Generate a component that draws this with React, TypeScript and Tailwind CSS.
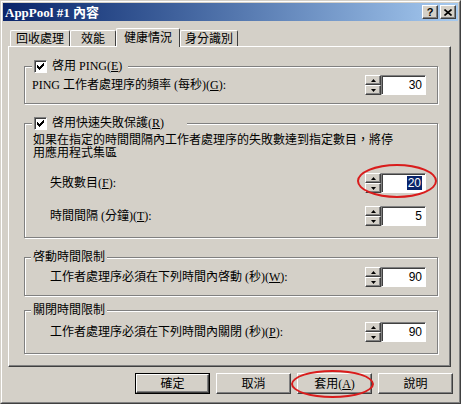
import type { ReactNode } from "react";

const raised =
  "border border-t-white border-l-white border-r-[#404040] border-b-[#404040] shadow-[inset_-1px_-1px_0_#808080]";
const sunken =
  "border border-t-[#808080] border-l-[#808080] border-r-white border-b-white shadow-[inset_1px_1px_0_#404040]";
const etched = "border border-[#808080] shadow-[inset_1px_1px_0_#fff,1px_1px_0_#fff]";

function Key({ k }: { k: string }) {
  return (
    <>
      (<span className="underline underline-offset-1">{k}</span>)
    </>
  );
}

function Check() {
  return (
    <span className={`flex h-[13px] w-[13px] shrink-0 items-center justify-center bg-white ${sunken}`}>
      <svg width="7" height="7" viewBox="0 0 7 7" shapeRendering="crispEdges">
        <path d="M0 2h1v1h1v1h1v-1h1v-1h1v-1h1v-1h1v3h-1v1h-1v1h-1v1h-1v1h-1v-1h-1v-1h-1v-1h-1z" fill="#000" />
      </svg>
    </span>
  );
}

function SpinArrow({ up }: { up?: boolean }) {
  return (
    <div className={`flex h-[10px] w-[16px] items-center justify-center bg-[#d4d0c8] ${raised}`}>
      <svg width="5" height="3" viewBox="0 0 5 3">
        <path d={up ? "M2.5 0 L5 3 L0 3 Z" : "M0 0 L5 0 L2.5 3 Z"} fill="#000" />
      </svg>
    </div>
  );
}

function Spin({ value, selected }: { value: string; selected?: boolean }) {
  return (
    <div className="flex h-[20px] w-[61px] shrink-0">
      <div className="flex flex-col">
        <SpinArrow up />
        <SpinArrow />
      </div>
      <div
        className={`flex flex-1 items-center justify-end bg-white pr-[3px] font-['Liberation_Sans',sans-serif] text-[12px] text-black ${sunken}`}
      >
        {selected ? (
          <span className="bg-[#0a246a] px-px leading-[14px] text-white">{value}</span>
        ) : (
          value
        )}
      </div>
    </div>
  );
}

function Row({ label, value, selected, className }: { label: ReactNode; value: string; selected?: boolean; className: string }) {
  return (
    <div className={`flex items-center justify-between pr-[11px] ${className}`}>
      <span className="leading-[14px]">{label}</span>
      <Spin value={value} selected={selected} />
    </div>
  );
}

const tabs = [
  { label: "回收處理", cls: "w-[60px]" },
  { label: "效能", cls: "w-[46px]" },
  { label: "健康情況", cls: "w-[64px]", active: true },
  { label: "身分識別", cls: "w-[58px]" },
];

const buttons = [
  { label: "確定", def: true },
  { label: "取消" },
  { label: <>套用<Key k="A" /></> },
  { label: "說明" },
];

export default function App() {
  return (
    <div
      className={`relative h-[404px] w-[461px] border border-t-[#d4d0c8] border-l-[#d4d0c8] border-r-[#404040] border-b-[#404040] bg-[#d4d0c8] text-[12px] text-black font-['Liberation_Serif','Noto_Sans_CJK_TC',serif]`}
    >
      <div className="flex h-full flex-col border border-t-white border-l-white border-r-[#808080] border-b-[#808080] p-px">
        {/* title bar */}
        <div className="flex h-[18px] shrink-0 items-center justify-between bg-gradient-to-r from-[#0a246a] to-[#a6caf0] pl-[2px] pr-[2px]">
          <span className="text-[13px] font-bold leading-none text-white">AppPool #1 內容</span>
          <div className="flex gap-[2px]">
            <div className={`flex h-[14px] w-[16px] items-center justify-center bg-[#d4d0c8] ${raised}`}>
              <span className="font-['Liberation_Sans',sans-serif] text-[11px] font-bold leading-none">?</span>
            </div>
            <div className={`flex h-[14px] w-[16px] items-center justify-center bg-[#d4d0c8] ${raised}`}>
              <svg width="8" height="7" viewBox="0 0 8 7">
                <path d="M0.5 0.5 L7.5 6.5 M7.5 0.5 L0.5 6.5" stroke="#000" strokeWidth="1.6" />
              </svg>
            </div>
          </div>
        </div>

        {/* tabs */}
        <div className="relative z-10 mt-[7px] flex h-[18px] items-end pl-[7px]">
          {tabs.map((t) =>
            t.active ? (
              <div
                key={t.label}
                className={`-mb-px flex h-[19px] items-start justify-center rounded-t-[2px] border border-b-0 border-t-white border-l-white border-r-[#404040] bg-[#d4d0c8] pt-[2px] leading-[14px] ${t.cls}`}
              >
                {t.label}
              </div>
            ) : (
              <div
                key={t.label}
                className={`flex h-[16px] items-start justify-center rounded-t-[2px] border border-b-0 border-t-white border-l-white border-r-[#404040] pt-px leading-[14px] ${t.cls}`}
              >
                {t.label}
              </div>
            )
          )}
        </div>

        {/* tab panel */}
        <div className={`ml-[5px] h-[321px] w-[443px] pl-[15px] pt-[12px] ${raised}`}>
          <fieldset className={`h-[45px] w-[414px] ${etched}`}>
            <legend className="ml-[7px] flex h-[14px] w-[96px] items-center bg-[#d4d0c8] pl-[2px]">
              <Check />
              <span className="ml-[5px] leading-[14px]">
                啓用 PING<Key k="E" />
              </span>
            </legend>
            <Row
              className="mt-[2px] pl-[7px]"
              label={<>PING 工作者處理序的頻率 (每秒)<Key k="G" />:</>}
              value="30"
            />
          </fieldset>

          <fieldset className={`mt-[12px] h-[122px] w-[414px] ${etched}`}>
            <legend className="ml-[7px] flex h-[14px] w-[155px] items-center bg-[#d4d0c8] pl-[2px]">
              <Check />
              <span className="ml-[5px] leading-[14px]">
                啓用快速失敗保護<Key k="R" />
              </span>
            </legend>
            <p className="mt-[4px] pl-[8px] leading-[13px]">
              如果在指定的時間間隔內工作者處理序的失敗數達到指定數目，將停
              <br />
              用應用程式集區
            </p>
            <Row className="mt-[13px] pl-[25px]" label={<>失敗數目<Key k="F" />:</>} value="20" selected />
            <Row className="mt-[13px] pl-[25px]" label={<>時間間隔 (分鐘)<Key k="T" />:</>} value="5" />
          </fieldset>

          <fieldset className={`mt-[12px] h-[46px] w-[414px] ${etched}`}>
            <legend className="ml-[6px] h-[14px] bg-[#d4d0c8] px-[2px] leading-[14px]">啓動時間限制</legend>
            <Row
              className="mt-[3px] pl-[25px]"
              label={<>工作者處理序必須在下列時間內啓動 (秒)<Key k="W" />:</>}
              value="90"
            />
          </fieldset>

          <fieldset className={`mt-[7px] h-[51px] w-[414px] ${etched}`}>
            <legend className="ml-[6px] h-[14px] bg-[#d4d0c8] px-[2px] leading-[14px]">關閉時間限制</legend>
            <Row
              className="mt-[5px] pl-[25px]"
              label={<>工作者處理序必須在下列時間內關閉 (秒)<Key k="P" />:</>}
              value="90"
            />
          </fieldset>
        </div>

        {/* buttons */}
        <div className="mt-[6px] flex justify-end gap-[6px] pr-[5px]">
          {buttons.map((b, i) =>
            b.def ? (
              <div key={i} className="h-[21px] w-[75px] border border-black">
                <div className={`flex h-full w-full items-center justify-center ${raised}`}>{b.label}</div>
              </div>
            ) : (
              <div key={i} className={`flex h-[21px] w-[75px] items-center justify-center ${raised}`}>
                {b.label}
              </div>
            )
          )}
        </div>
      </div>

      {/* red annotation marks */}
      <div className="absolute left-[356px] top-[163px] h-[34px] w-[80px] rounded-[50%] border-2 border-[#d91c1c]" />
      <div className="absolute left-[290px] top-[369px] h-[28px] w-[83px] rounded-[50%] border-2 border-[#d91c1c]" />
    </div>
  );
}
